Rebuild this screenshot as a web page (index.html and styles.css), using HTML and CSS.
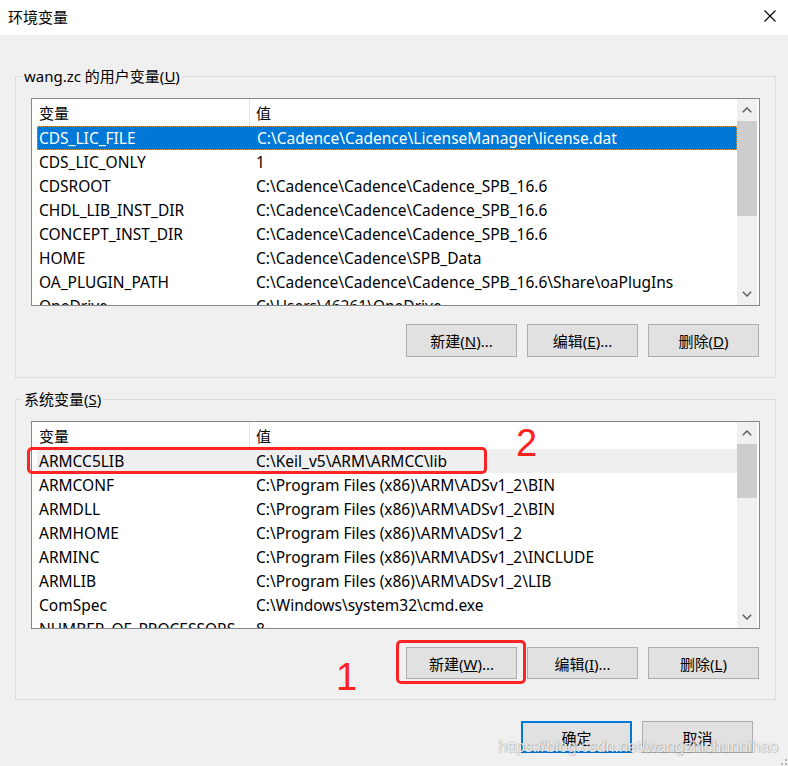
FILE: index.html
```html
<!DOCTYPE html>
<html lang="zh-CN">
<head>
    <meta charset="UTF-8">
    <title>环境变量</title>
    <link rel="stylesheet" href="styles.css">
</head>
<body>

<div class="dialog">
    <div class="titlebar">
        <span class="title">环境变量</span>
        <svg class="close" width="12" height="12" viewBox="0 0 12 12">
            <path d="M0.5 0.5 L11.5 11.5 M11.5 0.5 L0.5 11.5" stroke="#000" stroke-width="1.1" fill="none"/>
        </svg>
    </div>

    <div class="content">
        <fieldset class="group">
            <legend>wang.zc 的用户变量(<u>U</u>)</legend>
            <div class="list">
                <div class="list-body">
                    <div class="list-head">
                        <span class="head-name">变量</span>
                        <span class="head-value">值</span>
                    </div>
                    <div class="row selected"><span class="name">CDS_LIC_FILE</span><span class="value">C:\Cadence\Cadence\LicenseManager\license.dat</span></div>
                    <div class="row"><span class="name">CDS_LIC_ONLY</span><span class="value">1</span></div>
                    <div class="row"><span class="name">CDSROOT</span><span class="value">C:\Cadence\Cadence\Cadence_SPB_16.6</span></div>
                    <div class="row"><span class="name">CHDL_LIB_INST_DIR</span><span class="value">C:\Cadence\Cadence\Cadence_SPB_16.6</span></div>
                    <div class="row"><span class="name">CONCEPT_INST_DIR</span><span class="value">C:\Cadence\Cadence\Cadence_SPB_16.6</span></div>
                    <div class="row"><span class="name">HOME</span><span class="value">C:\Cadence\Cadence\SPB_Data</span></div>
                    <div class="row"><span class="name">OA_PLUGIN_PATH</span><span class="value">C:\Cadence\Cadence\Cadence_SPB_16.6\Share\oaPlugIns</span></div>
                    <div class="row"><span class="name">OneDrive</span><span class="value">C:\Users\46261\OneDrive</span></div>
                </div>
                <div class="scrollbar">
                    <div class="arrow">
                        <svg width="10" height="6" viewBox="0 0 10 6"><path d="M0.8 5.2 L5 1 L9.2 5.2" stroke="#606060" stroke-width="1.5" fill="none"/></svg>
                    </div>
                    <div class="track"><div class="thumb" style="height: 95px"></div></div>
                    <div class="arrow">
                        <svg width="10" height="6" viewBox="0 0 10 6"><path d="M0.8 0.8 L5 5 L9.2 0.8" stroke="#606060" stroke-width="1.5" fill="none"/></svg>
                    </div>
                </div>
            </div>
            <div class="buttons">
                <button class="btn">新建(<u>N</u>)...</button>
                <button class="btn">编辑(<u>E</u>)...</button>
                <button class="btn">删除(<u>D</u>)</button>
            </div>
        </fieldset>

        <fieldset class="group group-system">
            <legend>系统变量(<u>S</u>)</legend>
            <div class="list">
                <div class="list-body">
                    <div class="list-head">
                        <span class="head-name">变量</span>
                        <span class="head-value">值</span>
                    </div>
                    <div class="row inactive"><span class="name">ARMCC5LIB</span><span class="value">C:\Keil_v5\ARM\ARMCC\lib</span></div>
                    <div class="row"><span class="name">ARMCONF</span><span class="value">C:\Program Files (x86)\ARM\ADSv1_2\BIN</span></div>
                    <div class="row"><span class="name">ARMDLL</span><span class="value">C:\Program Files (x86)\ARM\ADSv1_2\BIN</span></div>
                    <div class="row"><span class="name">ARMHOME</span><span class="value">C:\Program Files (x86)\ARM\ADSv1_2</span></div>
                    <div class="row"><span class="name">ARMINC</span><span class="value">C:\Program Files (x86)\ARM\ADSv1_2\INCLUDE</span></div>
                    <div class="row"><span class="name">ARMLIB</span><span class="value">C:\Program Files (x86)\ARM\ADSv1_2\LIB</span></div>
                    <div class="row"><span class="name">ComSpec</span><span class="value">C:\Windows\system32\cmd.exe</span></div>
                    <div class="row"><span class="name">NUMBER_OF_PROCESSORS</span><span class="value">8</span></div>
                </div>
                <div class="scrollbar">
                    <div class="arrow">
                        <svg width="10" height="6" viewBox="0 0 10 6"><path d="M0.8 5.2 L5 1 L9.2 5.2" stroke="#606060" stroke-width="1.5" fill="none"/></svg>
                    </div>
                    <div class="track"><div class="thumb" style="height: 54px"></div></div>
                    <div class="arrow">
                        <svg width="10" height="6" viewBox="0 0 10 6"><path d="M0.8 0.8 L5 5 L9.2 0.8" stroke="#606060" stroke-width="1.5" fill="none"/></svg>
                    </div>
                </div>
            </div>
            <div class="buttons">
                <button class="btn btn-sys">新建(<u>W</u>)...</button>
                <button class="btn btn-sys">编辑(<u>I</u>)...</button>
                <button class="btn btn-sys">删除(<u>L</u>)</button>
            </div>
        </fieldset>

        <div class="footer">
            <button class="btn btn-sys default">确定</button>
            <button class="btn btn-sys">取消</button>
        </div>
    </div>

    <!-- annotations drawn on top of the screenshot -->
    <div class="mark mark-row"></div>
    <div class="mark mark-btn"></div>
    <span class="step step-1">1</span>
    <span class="step step-2">2</span>
    <span class="watermark">https://blog.csdn.net/wangzhichunnihao</span>
    <svg class="grip" width="6" height="6" viewBox="0 0 6 6">
        <rect x="4" y="0" width="2" height="2" fill="#b8b8b8"/>
        <rect x="0" y="4" width="2" height="2" fill="#b8b8b8"/>
        <rect x="4" y="4" width="2" height="2" fill="#b8b8b8"/>
    </svg>
</div>

</body>
</html>
```

FILE: styles.css
```css
body {
    margin: 0;
    font-family: "Noto Sans", "Noto Sans CJK SC", sans-serif;
    font-size: 15px;
    color: #000;
    background: #f0f0f0;
}
.dialog {
    position: relative;
    width: 788px;
    height: 766px;
    overflow: hidden;
    background: #f0f0f0;
}
.titlebar {
    height: 35px;
    background: #fff;
    display: flex;
    align-items: center;
    justify-content: space-between;
    padding: 0 12px 3px 8px;
    box-sizing: border-box;
}
.content {
    padding: 0 12px 0 15px;
}
.group {
    margin: 31px 0 0 0;
    padding: 12px 15px 20px 15px;
    border: 1px solid #dcdcdc;
    min-width: 0;
}
.group legend {
    margin-left: -9px;
    padding: 0 2px;
    line-height: 20px;
}
.group-system {
    margin-top: 11px;
}
.list {
    display: flex;
    height: 206px;
    border: 1px solid #828790;
    background: #fff;
}
.list-body {
    flex: 1;
    overflow: hidden;
}
.list-head {
    display: flex;
    height: 27px;
    align-items: center;
}
.head-name {
    width: 217px;
    padding-left: 7px;
    box-sizing: border-box;
}
.head-value {
    align-self: stretch;
    display: flex;
    align-items: center;
    border-left: 1px solid #e5e5e5;
    padding-left: 6px;
}
.row {
    display: flex;
    align-items: center;
    height: 24px;
    margin-left: 5px;
    font-size: 15.5px;
    white-space: nowrap;
    box-sizing: border-box;
}
.row .name {
    width: 212px;
    padding-left: 2px;
    box-sizing: border-box;
}
.row .value {
    padding-left: 7px;
}
.row.selected {
    background: #0078d7;
    color: #fff;
    border: 1px dotted #d9a04a;
}
.row.selected .name {
    padding-left: 1px;
}
.row.inactive {
    background: #efefef;
}
.scrollbar {
    width: 20px;
    margin-right: 2px;
    background: #f0f0f0;
    display: flex;
    flex-direction: column;
}
.arrow {
    height: 22px;
    display: flex;
    align-items: center;
    justify-content: center;
}
.track {
    flex: 1;
}
.thumb {
    background: #cdcdcd;
}
.buttons {
    display: flex;
    justify-content: flex-end;
    gap: 10px;
    margin-top: 18px;
    padding-right: 1px;
}
.btn {
    width: 111px;
    height: 33px;
    font-family: inherit;
    font-size: 15px;
    color: #000;
    background: #e1e1e1;
    border: 1px solid #adadad;
    padding: 0;
    box-sizing: border-box;
}
.btn-sys {
    height: 32px;
}
.btn.default {
    border: 2px solid #0078d7;
}
.footer {
    display: flex;
    justify-content: flex-end;
    gap: 10px;
    margin-top: 21px;
    padding-right: 23px;
}

/* red marks */
.mark {
    position: absolute;
    border: 3px solid #ff2424;
    border-radius: 5px;
    box-sizing: border-box;
}
.mark-row {
    left: 27px;
    top: 447px;
    width: 460px;
    height: 27px;
}
.mark-btn {
    left: 396px;
    top: 640px;
    width: 130px;
    height: 44px;
}
.step {
    position: absolute;
    font-family: "Liberation Sans", Arial, sans-serif;
    font-size: 38px;
    line-height: 1;
    color: #ff2020;
}
.step-1 {
    left: 336px;
    top: 658px;
}
.step-2 {
    left: 516px;
    top: 424px;
}
.watermark {
    position: absolute;
    left: 498px;
    top: 739px;
    font-family: "Liberation Sans", Arial, sans-serif;
    font-size: 16px;
    line-height: 1;
    color: rgba(255, 255, 255, 0.85);
    text-shadow: 0 0 1px rgba(0, 0, 0, 0.35), 1px 1px 1px rgba(0, 0, 0, 0.15);
    white-space: nowrap;
}
.grip {
    position: absolute;
    right: 1px;
    bottom: 1px;
}
```
